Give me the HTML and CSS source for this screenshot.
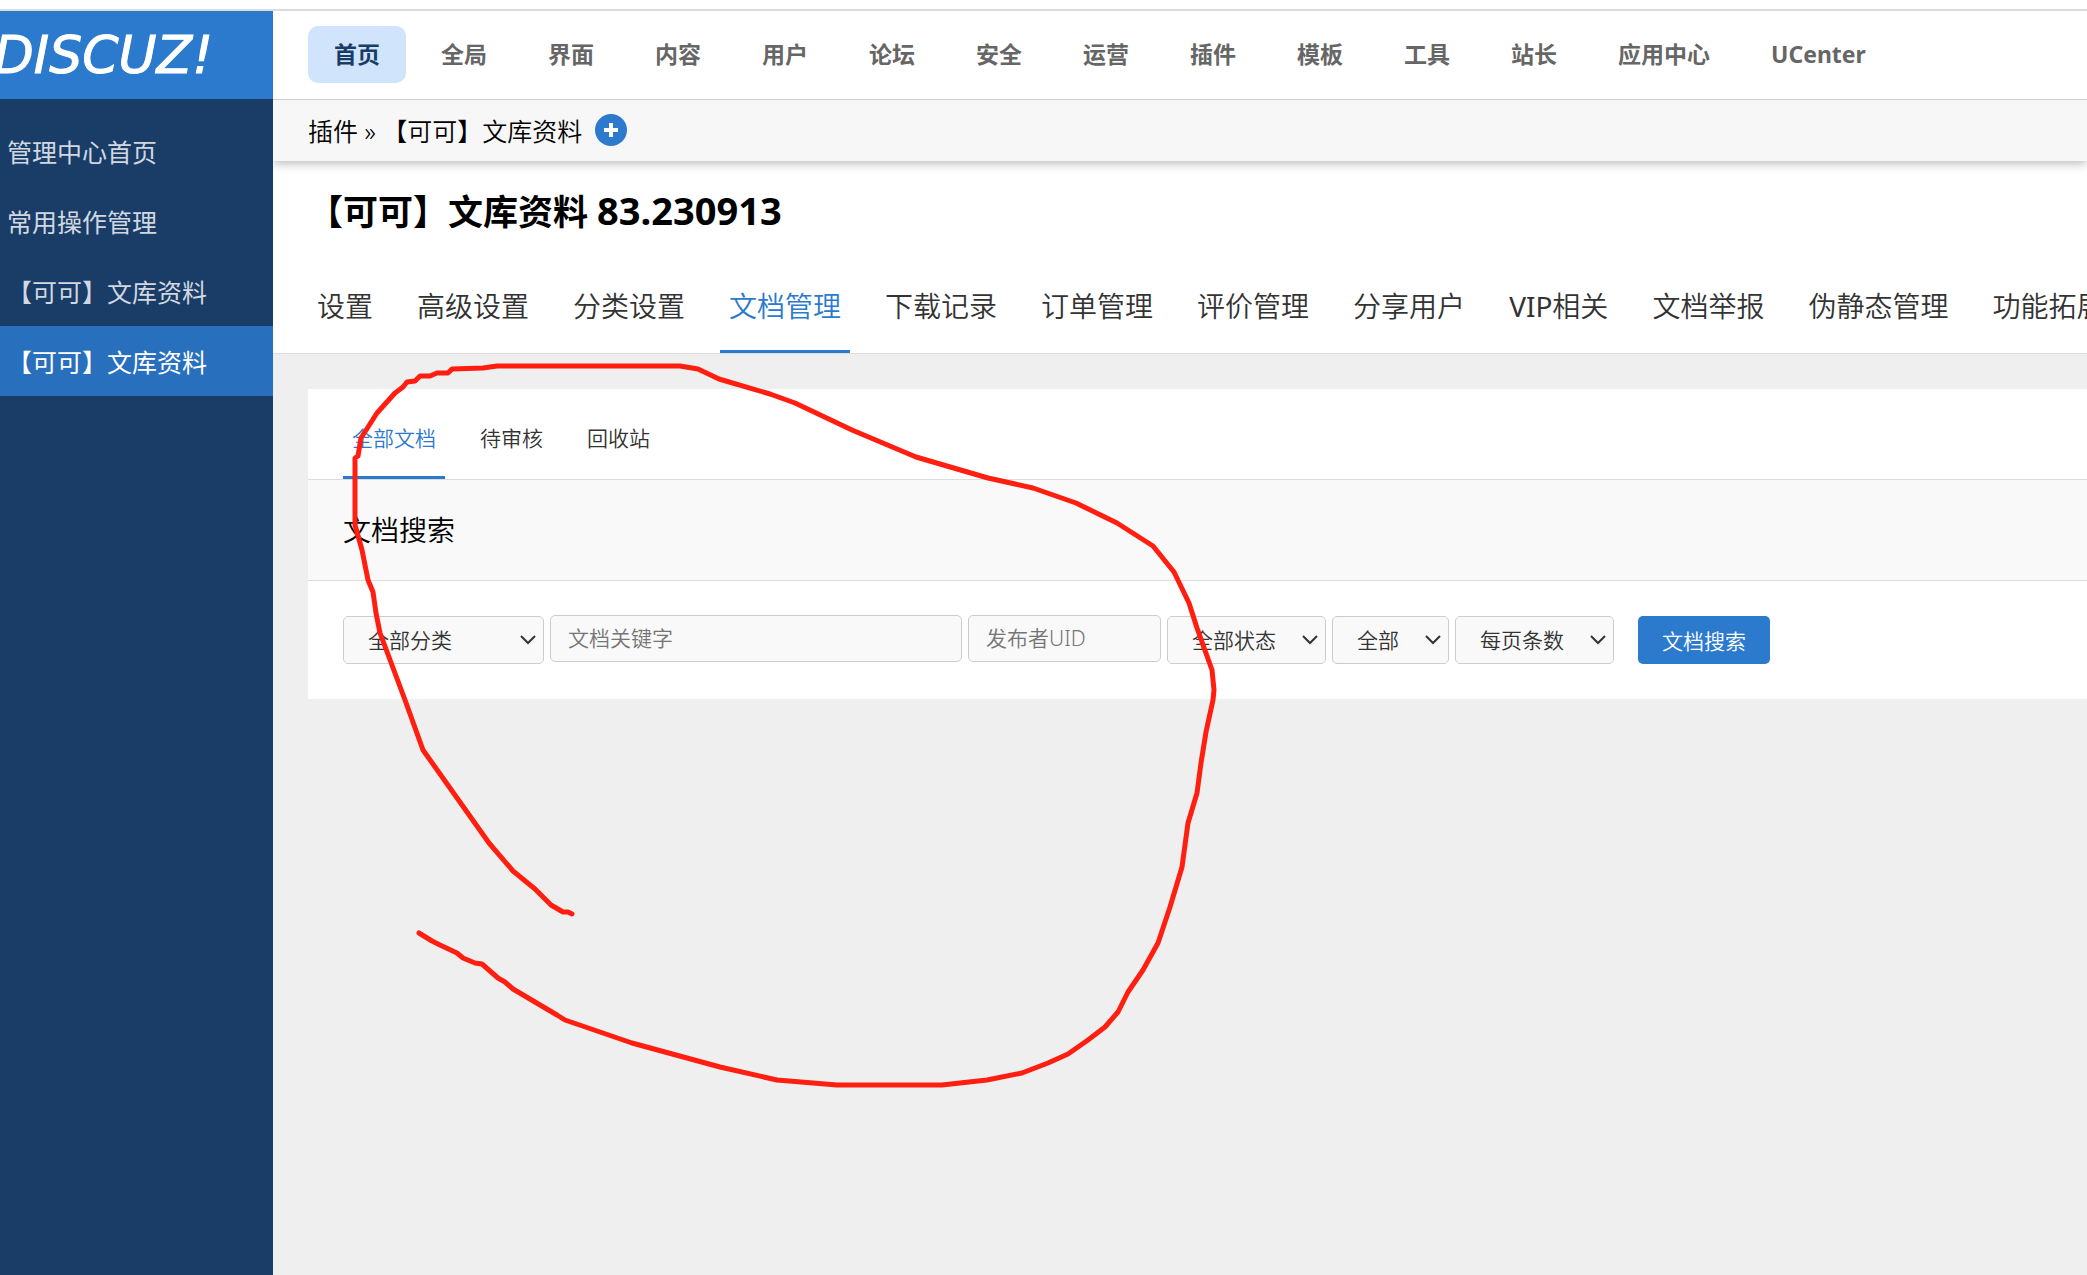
FILE: index.html
```html
<!DOCTYPE html>
<html lang="zh-CN">
<head>
<meta charset="utf-8">
<meta name="viewport" content="width=device-width, initial-scale=1">
<title>管理中心 - 文库资料</title>
<link rel="stylesheet" href="styles.css">
</head>
<body>
<div class="app">
  <aside class="sidebar">
    <a class="logo" href="#">DISCUZ!</a>
    <nav class="side-nav">
      <a href="#">管理中心首页</a>
      <a href="#">常用操作管理</a>
      <a href="#">【可可】文库资料</a>
      <a class="active" href="#">【可可】文库资料</a>
    </nav>
  </aside>

  <div class="page">
    <nav class="top-nav">
      <a class="active" href="#">首页</a>
      <a href="#">全局</a>
      <a href="#">界面</a>
      <a href="#">内容</a>
      <a href="#">用户</a>
      <a href="#">论坛</a>
      <a href="#">安全</a>
      <a href="#">运营</a>
      <a href="#">插件</a>
      <a href="#">模板</a>
      <a href="#">工具</a>
      <a href="#">站长</a>
      <a href="#">应用中心</a>
      <a href="#">UCenter</a>
    </nav>

    <div class="crumbs">
      <span>插件 » 【可可】文库资料</span>
      <button class="add" type="button" aria-label="添加">
        <svg viewBox="0 0 32 32" width="32" height="32" aria-hidden="true">
          <circle cx="16" cy="16" r="16" fill="#2b7acd"/>
          <path d="M16 9v14M9 16h14" stroke="#fff" stroke-width="4"/>
        </svg>
      </button>
    </div>

    <header class="heading">
      <h1>【可可】文库资料 <span class="version">83.230913</span></h1>
      <nav class="tabs">
        <a href="#">设置</a>
        <a href="#">高级设置</a>
        <a href="#">分类设置</a>
        <a class="active" href="#">文档管理</a>
        <a href="#">下载记录</a>
        <a href="#">订单管理</a>
        <a href="#">评价管理</a>
        <a href="#">分享用户</a>
        <a href="#"><span class="latin">VIP</span>相关</a>
        <a href="#">文档举报</a>
        <a href="#">伪静态管理</a>
        <a href="#">功能拓展</a>
      </nav>
    </header>

    <main class="card">
      <nav class="tabs tabs-small">
        <a class="active" href="#">全部文档</a>
        <a href="#">待审核</a>
        <a href="#">回收站</a>
      </nav>
      <h2>文档搜索</h2>
      <form class="search">
        <select class="category" aria-label="分类"><option>全部分类</option></select>
        <input class="keyword" type="text" placeholder="文档关键字" aria-label="文档关键字">
        <input class="uid" type="text" placeholder="发布者UID" aria-label="发布者UID">
        <select class="state" aria-label="状态"><option>全部状态</option></select>
        <select class="scope" aria-label="范围"><option>全部</option></select>
        <select class="state" aria-label="每页条数"><option>每页条数</option></select>
        <button class="submit" type="button">文档搜索</button>
      </form>
    </main>
  </div>
</div>

<!-- Hand-drawn marker stroke over the page -->
<svg class="marker" viewBox="0 0 2087 1275" width="2087" height="1275" aria-hidden="true">
  <polyline points="572,914 568,912 563,912 551,905 535,889 513,871 489,843 467,812 423,750 405,700 380,633 376,613 373,592 368,580 362,550 355,525 355,458 358,456 361,438 377,413 395,393 403,387 407,382 415,381 420,376 430,376 437,373 448,373 452,369 483,368 497,366 680,366 698,369 719,379 770,394 795,403 852,430 916,457 988,478 1033,488 1076,503 1117,523 1153,546 1174,572 1189,603 1197,628 1212,670 1214,690 1213,700 1206,732 1201,763 1197,793 1188,823 1182,867 1170,907 1158,943 1143,970 1128,992 1118,1012 1105,1027 1088,1040 1068,1054 1048,1063 1022,1073 987,1080 942,1085 837,1085 777,1080 720,1067 632,1043 565,1020 557,1015 513,989 505,982 498,978 482,964 475,963 463,958 457,953 440,945 432,941 419,933"/>
</svg>
</body>
</html>
```
FILE: styles.css
```css
* {
  box-sizing: border-box;
}

body {
  margin: 0;
  padding-top: 9px;
  background: #fff;
  color: #000;
  font-family: "Noto Sans", "Noto Sans CJK SC", sans-serif;
  font-size: 21px;
  font-weight: 350;
  overflow: hidden;
}

a {
  color: inherit;
  text-decoration: none;
  white-space: nowrap;
}

.app {
  display: flex;
  min-height: calc(100vh - 9px);
  border-top: 2px solid #dcdcdc;
}

.sidebar {
  flex: 0 0 273px;
  min-width: 0;
  background: #193d67;
}

.logo {
  display: flex;
  align-items: center;
  justify-content: flex-end;
  height: 88px;
  padding-right: 60px;
  overflow: hidden;
  background: #2b7acd;
  color: #fff;
  font: italic 400 52px/88px "DejaVu Sans", sans-serif;
  -webkit-text-stroke: 1px #fff;
}

.side-nav {
  display: flex;
  flex-direction: column;
  padding-top: 17px;
}

.side-nav a {
  padding: 2px 0 0 7px;
  color: #d1d8e1;
  font-size: 25px;
  font-weight: 400;
  line-height: 68px;
}

.side-nav .active {
  background: #286fbe;
  color: #fff;
}

.page {
  flex: 1;
  min-width: 0;
  overflow: hidden;
  background: #efefef;
}

.top-nav {
  position: relative;
  z-index: 1;
  display: flex;
  align-items: center;
  gap: 9px;
  height: 89px;
  padding: 0 35px 2px;
  border-bottom: 1px solid #ccc;
  background: #fff;
}

.top-nav a {
  padding: 0 26px;
  border-radius: 10px;
  color: #666;
  font-size: 23px;
  font-weight: 700;
  line-height: 57px;
}

.top-nav .active {
  background: #d0e4fc;
  color: #193d67;
}

.crumbs {
  position: relative;
  display: flex;
  align-items: center;
  gap: 13px;
  height: 61px;
  padding: 0 35px 2px;
  background: #f7f7f7;
  box-shadow: 0 2px 10px rgba(0, 0, 0, 0.3);
  font-size: 25px;
}

.add {
  display: flex;
  padding: 0;
  border: 0;
  background: none;
}

.heading {
  border-bottom: 1px solid #dcdcdc;
  background: #fff;
}

h1 {
  margin: 0;
  padding: 2px 35px 0;
  font-size: 35px;
  font-weight: 700;
  line-height: 98px;
}

.version {
  font-size: 38px;
  line-height: 1;
}

.latin {
  font-weight: 400;
}

.tabs {
  display: flex;
  gap: 26px;
  padding: 0 35px;
}

.tabs a {
  padding: 2px 9px 0;
  border-bottom: 3px solid transparent;
  color: #333;
  font-size: 28px;
  line-height: 87px;
}

.tabs .active {
  border-color: #2b7acd;
  color: #2b7acd;
}

.card {
  margin: 35px 0 0 35px;
  background: #fff;
}

.tabs-small {
  border-bottom: 1px solid #dcdcdc;
}

.tabs-small a {
  padding-top: 11px;
  font-size: 21px;
  line-height: 76px;
}

h2 {
  margin: 0;
  padding: 0 35px;
  border-bottom: 1px solid #dcdcdc;
  background: #f9f9f9;
  font-size: 28px;
  font-weight: 350;
  line-height: 100px;
}

.search {
  display: flex;
  gap: 6px;
  padding: 34px 35px 35px;
}

.search select,
.search input {
  height: 48px;
  border: 1px solid #ccc;
  border-radius: 5px;
  background-color: #f9f9f9;
  color: #333;
  font: inherit;
}

.search select {
  appearance: none;
  margin: 1px 0 0;
  padding: 0 24px;
  background-image: url("data:image/svg+xml,%3Csvg xmlns='http://www.w3.org/2000/svg' width='16' height='10'%3E%3Cpath d='M1 1l7 7 7-7' fill='none' stroke='%23333' stroke-width='2'/%3E%3C/svg%3E");
  background-position: right 7px center;
  background-repeat: no-repeat;
}

.search input {
  height: 47px;
  padding: 0 17px 2px;
}

.search input::placeholder {
  color: #757575;
}

.category {
  width: 201px;
}

.search .keyword {
  width: 412px;
}

.search .uid {
  width: 193px;
}

.state {
  width: 159px;
}

.scope {
  width: 117px;
}

.submit {
  height: 48px;
  margin: 1px 0 0 18px;
  padding: 0 24px;
  border: 0;
  border-radius: 5px;
  background: #2b7acd;
  color: #fff;
  font: inherit;
}

.marker {
  position: absolute;
  top: 0;
  left: 0;
  fill: none;
  stroke: #ff1e0f;
  stroke-width: 5px;
  stroke-linecap: round;
  stroke-linejoin: round;
  pointer-events: none;
}
```
